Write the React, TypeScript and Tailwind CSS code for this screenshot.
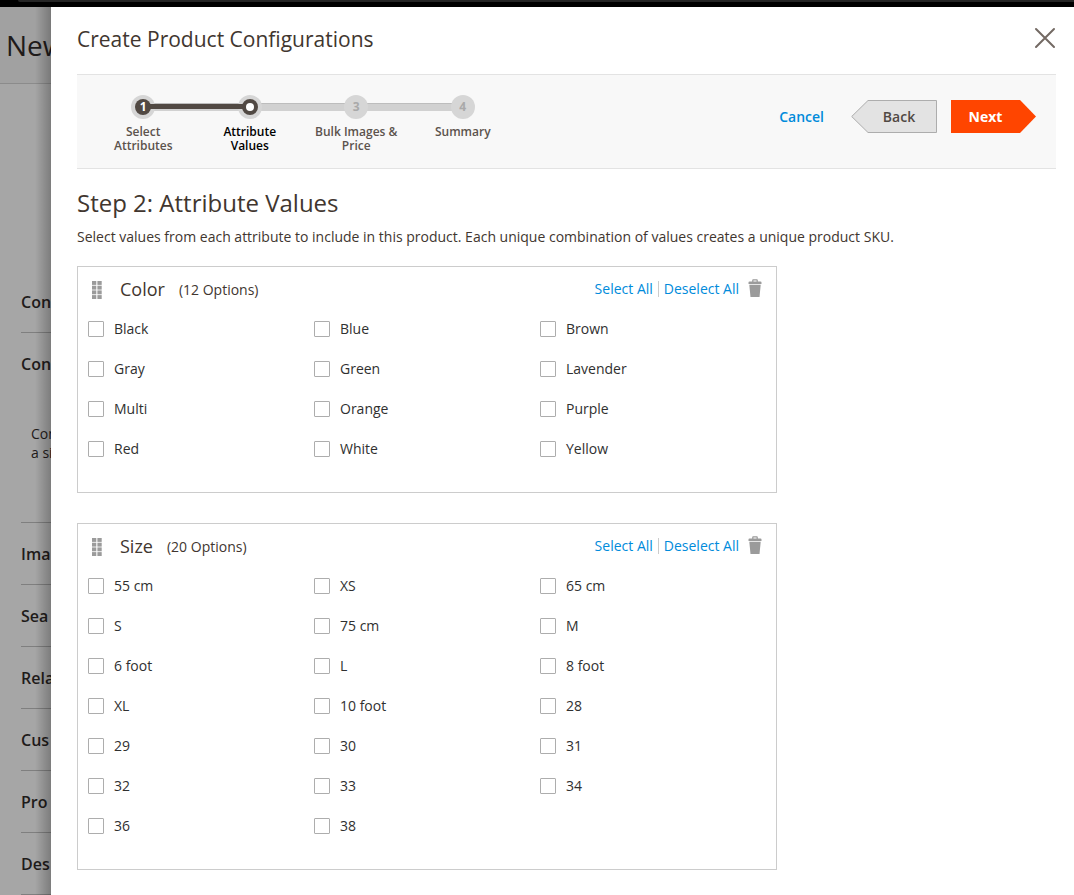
import React, { useState } from "react";

const colors = [
  "Black", "Blue", "Brown", "Gray", "Green", "Lavender",
  "Multi", "Orange", "Purple", "Red", "White", "Yellow",
];

const sizes = [
  "55 cm", "XS", "65 cm", "S", "75 cm", "M", "6 foot", "L", "8 foot", "XL",
  "10 foot", "28", "29", "30", "31", "32", "33", "34", "36", "38",
];

const sections = ["Ima", "Sea", "Rela", "Cus", "Pro", "Des"];

function PageBehind() {
  return (
    <aside className="relative w-[51px] shrink-0 overflow-hidden whitespace-nowrap bg-[#a6a6a6] text-[#1f1b1a]">
      <div className="flex h-[77px] items-center border-b border-[#8b8b8b] bg-[#a1a1a1] pl-1.5 text-[28px]">
        New
      </div>
      <div className="ml-[21px] pt-[187px] text-base font-semibold">
        <div className="flex h-[62px] items-center border-b border-[#7f7f7f]">Con</div>
        <div className="h-[190px] border-b border-[#7f7f7f]">
          <div className="flex h-[62px] items-center">Con</div>
          <p className="mt-[29px] pl-2.5 text-sm leading-[19px] font-normal">
            Con
            <br />a sim
          </p>
        </div>
        {sections.map((name) => (
          <div key={name} className="flex h-[62px] items-center border-b border-[#7f7f7f]">
            {name}
          </div>
        ))}
      </div>
      <div className="absolute inset-y-0 right-0 w-4 bg-linear-to-r from-transparent to-black/25" />
    </aside>
  );
}

type StepState = "done" | "current" | "todo";

function Step({ number, label, state }: { number: number; label: string; state: StepState }) {
  return (
    <li className="relative flex flex-col items-center">
      {number > 1 && (
        <span className="absolute top-2 right-1/2 h-2 w-full border-t border-[#bdbdbd] bg-[#d1d1d1]" />
      )}
      {state === "current" && (
        <span className="absolute top-[9px] right-1/2 z-20 h-[5px] w-full bg-[#514943]" />
      )}
      <span className="relative z-10 flex size-6 items-center justify-center rounded-full bg-[#d6d6d6] text-xs font-bold text-[#a9a9a9]">
        {state === "todo" && number}
      </span>
      {state !== "todo" && (
        <span className="absolute top-1 z-30 flex size-4 items-center justify-center rounded-full bg-[#514943] text-xs leading-4 font-bold text-white">
          {state === "done" ? number : <span className="size-2 rounded-full bg-white" />}
        </span>
      )}
      <span
        className={
          "mt-1.5 px-2 text-center text-xs leading-[14px] font-semibold " +
          (state === "current" ? "text-black" : "text-[#5c534d]")
        }
      >
        {label}
      </span>
    </li>
  );
}

function Grip() {
  return (
    <svg width="10" height="18" viewBox="0 0 10 18" fill="#9b9b9b" aria-hidden="true">
      {[0, 4.7, 9.4, 14.1].map((y) => (
        <React.Fragment key={y}>
          <rect x="0" y={y} width="4.3" height="3.9" />
          <rect x="5.4" y={y} width="4.3" height="3.9" />
        </React.Fragment>
      ))}
    </svg>
  );
}

function Trash() {
  return (
    <svg width="14" height="18" viewBox="0 0 14 18" fill="#9b9b9b" aria-hidden="true">
      <path d="M4.2 2.5V1.3Q4.2.2 5.1.2h3.8q.9 0 .9 1.1v1.2h2.7q1 0 1 1v1.5H.5V3.5q0-1 1-1zm1.2 0h3.2V1.6H5.4z" />
      <path d="M1.3 5.8h11.4l-1.2 12.2h-9z" />
    </svg>
  );
}

function AttributePanel({ name, options }: { name: string; options: string[] }) {
  const [checked, setChecked] = useState<string[]>([]);
  const toggle = (option: string) =>
    setChecked((now) => (now.includes(option) ? now.filter((o) => o !== option) : [...now, option]));
  return (
    <section className="max-w-[700px] border border-[#cccccc] px-2.5 pb-[23px]">
      <header className="flex h-[42px] items-center pt-1">
        <span className="ml-1 cursor-move">
          <Grip />
        </span>
        <h3 className="mb-0.5 ml-[18px] text-lg text-[#41362f]">{name}</h3>
        <span className="ml-3.5 text-sm text-[#41362f]">({options.length} Options)</span>
        <div className="mb-0.5 ml-auto flex items-center text-sm text-[#008bdb]">
          <button type="button" onClick={() => setChecked(options)}>Select All</button>
          <span className="mx-[5px] h-4 w-px bg-[#cccccc]" />
          <button type="button" onClick={() => setChecked([])}>Deselect All</button>
        </div>
        <button type="button" aria-label="Remove attribute" className="mr-1 mb-1 ml-[9px]">
          <Trash />
        </button>
      </header>
      <ul className="grid grid-cols-3">
        {options.map((option) => (
          <li key={option}>
            <label className="flex h-10 items-center gap-2.5 text-sm text-[#303030]">
              <input
                type="checkbox"
                checked={checked.includes(option)}
                onChange={() => toggle(option)}
                className="size-4 appearance-none rounded-[1px] border border-[#adadad] bg-white checked:bg-[#514943]"
              />
              {option}
            </label>
          </li>
        ))}
      </ul>
    </section>
  );
}

export default function App() {
  return (
    <div className="flex h-screen flex-col overflow-hidden bg-white font-['Open_Sans',sans-serif]">
      <div className="h-[7px] shrink-0 bg-black pl-[18px]">
        <div className="h-0.5 rounded-bl-sm bg-[#252525]" />
      </div>
      <div className="flex min-h-0 flex-1">
        <PageBehind />
        <main className="min-w-0 flex-1 overflow-hidden pr-[18px] pl-[26px]">
          <header className="flex h-[67px] items-center justify-between pb-0.5">
            <h1 className="text-[21px] text-[#41362f]">Create Product Configurations</h1>
            <button type="button" aria-label="Close" className="mb-1">
              <svg width="22" height="22" viewBox="0 0 22 22" fill="none" stroke="#736963" strokeWidth="2" strokeLinecap="round">
                <path d="M2 2l18 18M20 2L2 20" />
              </svg>
            </button>
          </header>

          <div className="flex h-[95px] items-start justify-between border-y border-[#e3e3e3] bg-[#f8f8f8] pr-5 pl-[13px]">
            <ol className="mt-5 grid w-[426px] grid-cols-4">
              <Step number={1} label="Select Attributes" state="done" />
              <Step number={2} label="Attribute Values" state="current" />
              <Step number={3} label="Bulk Images & Price" state="todo" />
              <Step number={4} label="Summary" state="todo" />
            </ol>
            <div className="mt-[25px] flex items-center text-sm font-semibold">
              <button type="button" className="text-[#008bdb]">Cancel</button>
              <button type="button" className="relative ml-[27px] flex h-[33px] w-[86px] items-center justify-center pl-2.5 text-[#514943]">
                <svg className="absolute inset-0" width="86" height="33" viewBox="0 0 86 33" aria-hidden="true">
                  <path d="M17 .5H85.5V32.5H17L.7 16.5Z" fill="#e3e3e3" stroke="#adadad" />
                </svg>
                <span className="relative">Back</span>
              </button>
              <button type="button" className="relative ml-3.5 flex h-[33px] w-[85px] items-center justify-center pr-4 font-bold text-white">
                <svg className="absolute inset-0" width="85" height="33" viewBox="0 0 85 33" aria-hidden="true">
                  <path d="M0 0H69L85 16.5L69 33H0Z" fill="#ff4500" />
                </svg>
                <span className="relative">Next</span>
              </button>
            </div>
          </div>

          <h2 className="mt-[18px] text-2xl text-[#41362f]">Step 2: Attribute Values</h2>
          <p className="mt-2 text-sm text-[#41362f]">
            Select values from each attribute to include in this product. Each unique combination of values
            creates a unique product SKU.
          </p>
          <div className="mt-[19px] flex flex-col gap-[30px]">
            <AttributePanel name="Color" options={colors} />
            <AttributePanel name="Size" options={sizes} />
          </div>
        </main>
      </div>
    </div>
  );
}
